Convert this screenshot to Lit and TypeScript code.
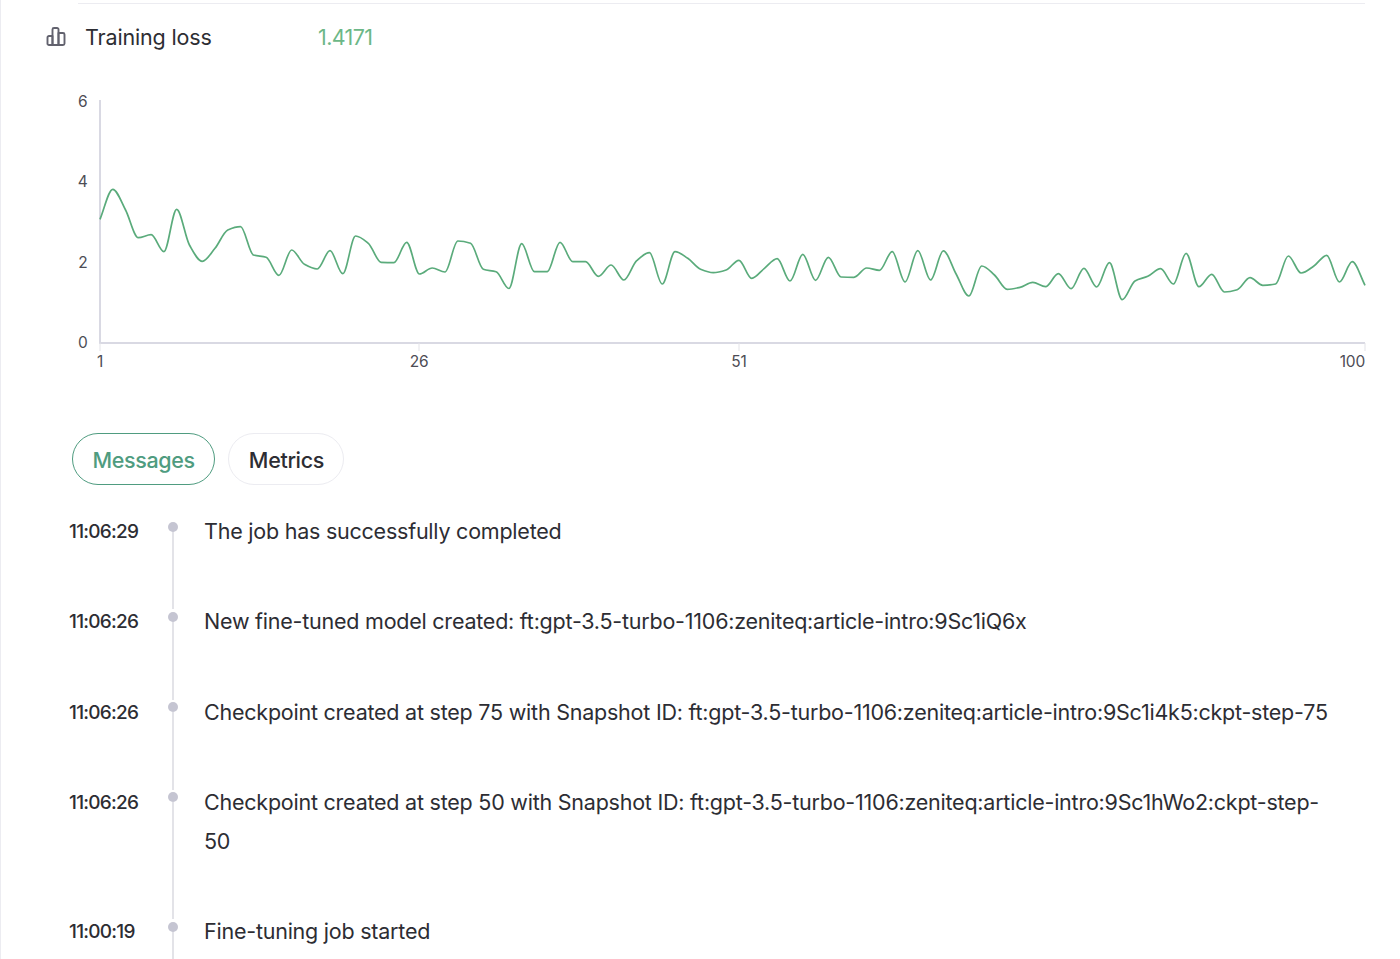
import {css, html, LitElement, svg} from 'lit';
import {customElement} from 'lit/decorators.js';

const LOSS_Y = [
  219.3, 189.3, 210, 237.7, 234.7, 251.7, 209.3, 245, 261.3, 248.3,
  230, 226.7, 255, 257.3, 275.3, 250, 264.3, 269, 250.7, 273.7,
  236, 243.3, 262.3, 262.7, 242.3, 274, 268, 272, 241, 243.3,
  269.3, 271.7, 288.5, 243.7, 271.7, 271.7, 242.3, 261.7, 261.7, 276.3,
  265, 280, 260.7, 252.7, 284, 251.7, 258.3, 269.3, 272.7, 270,
  260.3, 278.3, 268.3, 258.7, 281, 254.3, 280.3, 257.3, 277, 277.3,
  268, 270.3, 251.7, 282, 250.7, 280, 250.8, 274, 296, 266,
  275, 289.3, 287.3, 282.3, 286.7, 273.7, 288.7, 268.3, 287, 262.7,
  299.7, 281, 276.3, 268.7, 284, 253.3, 286.7, 274.3, 292, 289.7,
  277.7, 285.3, 284, 256, 273, 266, 255.3, 282, 261.7, 285.3,
];

const X0 = 100;
const STEP = (1365 - 100) / 99;

// Monotone cubic, same idea as d3 curveMonotoneX
function lossPath(ys: number[]): string {
  const n = ys.length;
  const slopes = ys.slice(1).map((y, i) => (y - ys[i]) / STEP);
  const tangents = ys.map((_, i) => {
    if (i === 0) return slopes[0];
    if (i === n - 1) return slopes[n - 2];
    const a = slopes[i - 1];
    const b = slopes[i];
    if (a * b <= 0) return 0;
    return (2 * a * b) / (a + b);
  });
  let d = `M${X0} ${ys[0]}`;
  for (let i = 0; i < n - 1; i++) {
    const x = X0 + i * STEP;
    const h = STEP / 3;
    d += `C${(x + h).toFixed(2)} ${(ys[i] + tangents[i] * h).toFixed(2)} ${(x + 2 * h).toFixed(2)} ${(ys[i + 1] - tangents[i + 1] * h).toFixed(2)} ${(x + STEP).toFixed(2)} ${ys[i + 1]}`;
  }
  return d;
}

const MESSAGES = [
  {time: '11:06:29', text: 'The job has successfully completed'},
  {time: '11:06:26', text: 'New fine-tuned model created: ft:gpt-3.5-turbo-1106:zeniteq:article-intro:9Sc1iQ6x'},
  {time: '11:06:26', text: 'Checkpoint created at step 75 with Snapshot ID: ft:gpt-3.5-turbo-1106:zeniteq:article-intro:9Sc1i4k5:ckpt-step-75'},
  {time: '11:06:26', text: 'Checkpoint created at step 50 with Snapshot ID: ft:gpt-3.5-turbo-1106:zeniteq:article-intro:9Sc1hWo2:ckpt-step-50'},
  {time: '11:00:19', text: 'Fine-tuning job started'},
];

@customElement('app-root')
export class AppRoot extends LitElement {
  static styles = css`
    :host {
      display: block;
      height: 959px;
      overflow: hidden;
      background: #fff;
      font-family: Inter, 'Liberation Sans', sans-serif;
      color: #2d2d33;
      border-left: 1px solid #ececf1;
      box-sizing: border-box;
    }

    .rule {
      height: 1px;
      margin: 3px 35px 0 77px;
      background: #ececf1;
    }

    .metric {
      display: flex;
      align-items: center;
      height: 32px;
      margin: 17px 0 0 45px;
    }

    .metric svg {
      width: 20px;
      height: 20px;
      margin-right: 19px;
      color: #62626e;
    }

    .metric-name {
      width: 233px;
      font-size: 21.5px;
      letter-spacing: -0.15px;
    }

    .metric-value {
      font-size: 21.5px;
      letter-spacing: -0.6px;
      color: #6cb787;
    }

    .chart {
      display: block;
      width: 1400px;
      height: 333px;
      margin: 0 0 0 -1px;
    }

    .chart text {
      font-family: Inter, 'Liberation Sans', sans-serif;
      font-size: 15.5px;
      letter-spacing: -0.2px;
      fill: #4d4d55;
    }

    .tabs {
      display: flex;
      gap: 13px;
      margin: 47px 0 0 71px;
    }

    .tab {
      display: flex;
      align-items: center;
      height: 52px;
      box-sizing: border-box;
      padding: 2px 19.5px 0;
      border: 1px solid #ececf1;
      border-radius: 26px;
      font-size: 21.5px;
      font-weight: 500;
      letter-spacing: -0.35px;
      color: #2d2d33;
    }

    .tab.active {
      border-color: #4f9c80;
      color: #4f9c80;
    }

    .log {
      margin: 27px 65px 0 68px;
    }

    .row {
      display: grid;
      grid-template-columns: 86px 36px 1fr;
    }

    .time {
      font-size: 19px;
      font-weight: 500;
      letter-spacing: -0.75px;
      line-height: 39px;
    }

    .track {
      position: relative;
    }

    .track::before {
      content: '';
      position: absolute;
      top: 19px;
      bottom: -7px;
      left: 50%;
      width: 2px;
      margin-left: -1px;
      background: #e3e3e8;
    }

    .dot {
      position: absolute;
      top: 9.5px;
      left: 50%;
      width: 10px;
      height: 10px;
      margin-left: -5px;
      border-radius: 50%;
      background: #c5c5d2;
    }

    .text {
      padding: 0 0 51.3px 13px;
      font-size: 21.5px;
      letter-spacing: -0.23px;
      line-height: 39px;
    }
  `;

  private renderChart() {
    const yTicks = [
      {label: '6', y: 101},
      {label: '4', y: 181},
      {label: '2', y: 262},
      {label: '0', y: 342},
    ];
    const xTicks = [
      {label: '1', x: 100, anchor: 'middle'},
      {label: '26', x: 419, anchor: 'middle'},
      {label: '51', x: 739, anchor: 'middle'},
      {label: '100', x: 1365, anchor: 'end'},
    ];
    return html`
      <svg class="chart" viewBox="0 53 1400 333">
        <line x1="100" y1="100" x2="100" y2="344" stroke="#d9d9e3" stroke-width="2"></line>
        <line x1="100" y1="343" x2="1365" y2="343" stroke="#d9d9e3" stroke-width="2"></line>
        ${yTicks.map(t => svg`<text x="87.5" y=${t.y + 5.5} text-anchor="end">${t.label}</text>`)}
        ${xTicks.map(t => svg`
          <line x1=${t.x} y1="343" x2=${t.x} y2="351" stroke="#e3e3e8"></line>
          <text x=${t.x} y="367" text-anchor=${t.anchor}>${t.label}</text>
        `)}
        <path d=${lossPath(LOSS_Y)} fill="none" stroke="#5aab7b" stroke-width="1.7"></path>
      </svg>
    `;
  }

  render() {
    return html`
      <div class="rule"></div>
      <div class="metric">
        <svg viewBox="0 0 20 20" fill="none" stroke="currentColor" stroke-width="1.9" stroke-linejoin="round">
          <path d="M1.500 17V10.500A1.500 1.500 0 0 1 3 9h3.500v9H3A1.500 1.500 0 0 1 1.500 16.500z"></path>
          <path d="M6.500 18V2.500A1.500 1.500 0 0 1 8 1h3a1.500 1.500 0 0 1 1.500 1.500V18z"></path>
          <path d="M12.500 6H17a1.500 1.500 0 0 1 1.500 1.500v9A1.500 1.500 0 0 1 17 18h-4.500z"></path>
        </svg>
        <span class="metric-name">Training loss</span>
        <span class="metric-value">1.4171</span>
      </div>
      ${this.renderChart()}
      <div class="tabs">
        <div class="tab active">Messages</div>
        <div class="tab">Metrics</div>
      </div>
      <div class="log">
        ${MESSAGES.map(m => html`
          <div class="row">
            <div class="time">${m.time}</div>
            <div class="track"><span class="dot"></span></div>
            <div class="text">${m.text}</div>
          </div>
        `)}
      </div>
    `;
  }
}
